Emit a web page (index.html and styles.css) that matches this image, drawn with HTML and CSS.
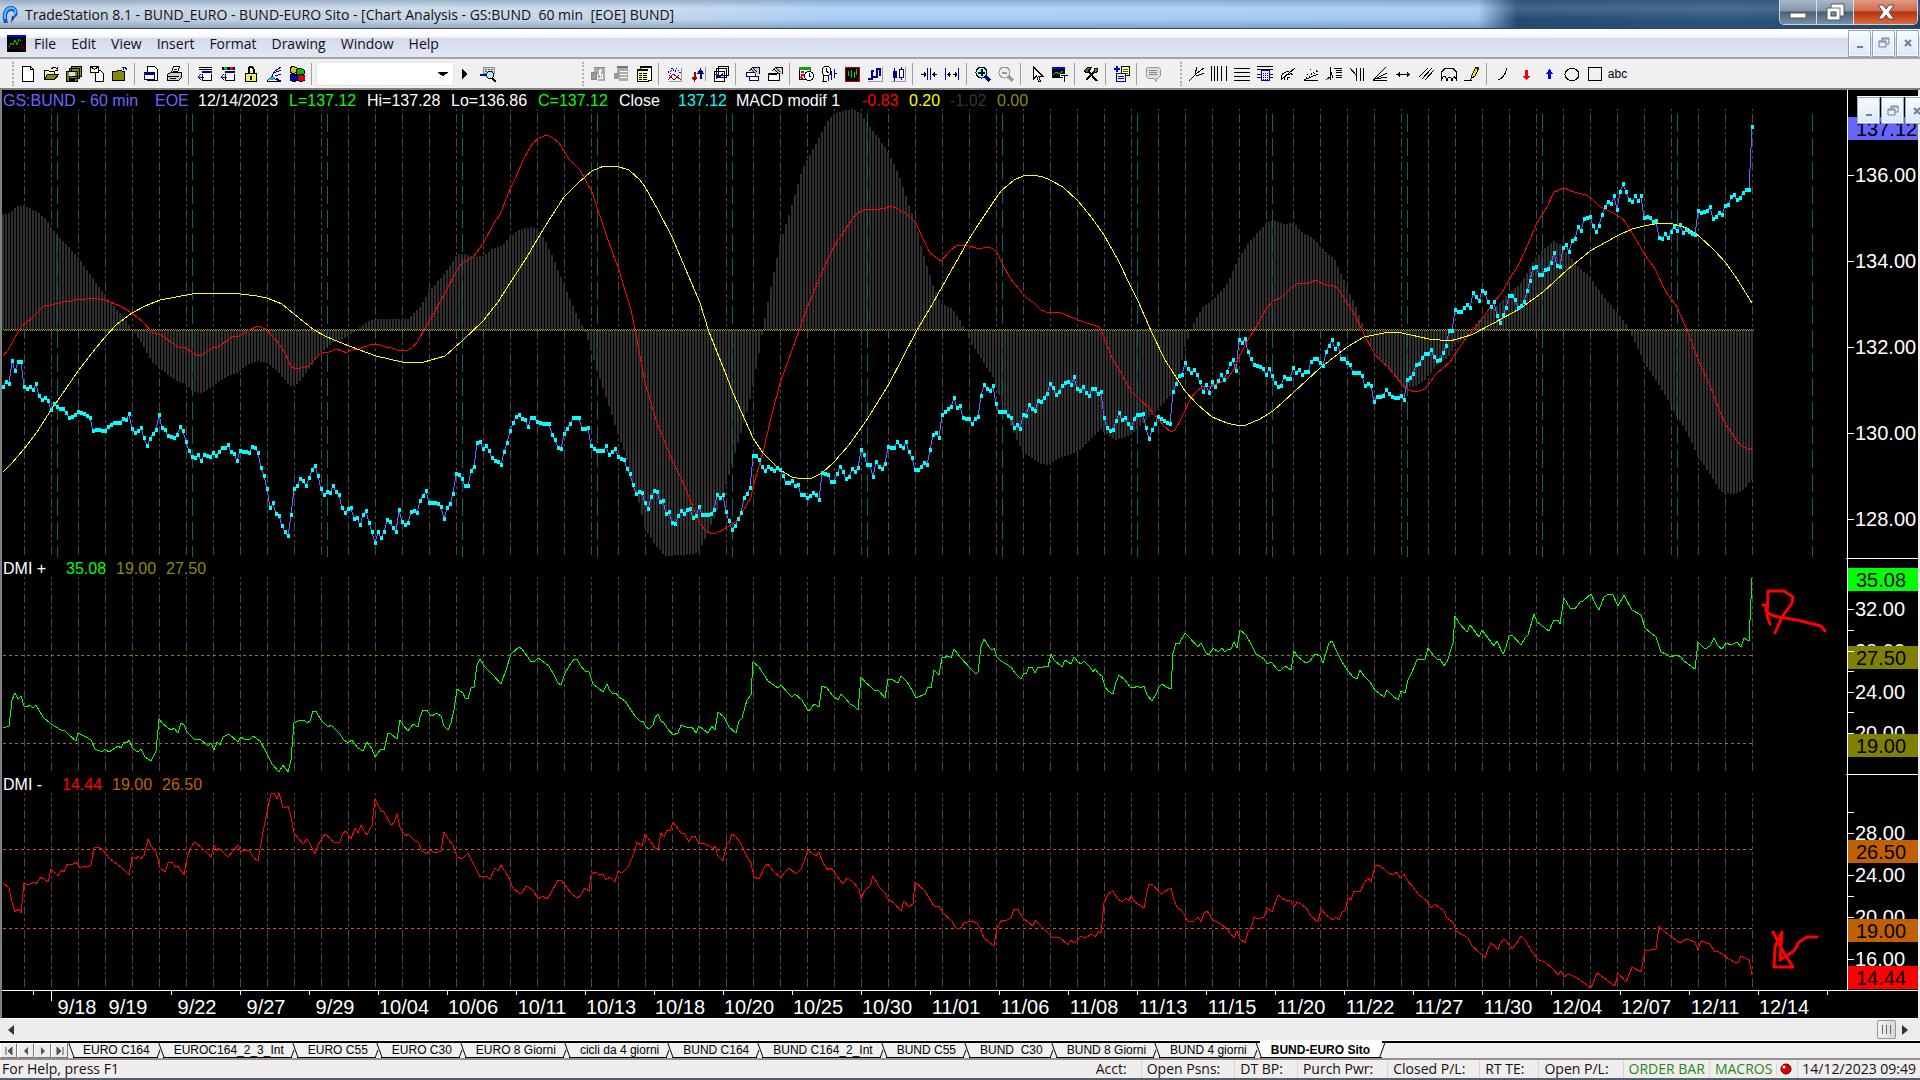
FILE: index.html
```html
<!DOCTYPE html>
<html lang="en">
<head>
    <meta charset="utf-8">
    <title>TradeStation 8.1 - BUND_EURO</title>
    <link rel="stylesheet" href="styles.css">
</head>
<body>
    <header class="titlebar">
        <svg class="logo" viewBox="0 0 18 20"><path d="M3 19C0 12 2 3 9 2c6-1 9 5 7 10l-3 2c1-4 0-7-3-7-4 0-5 6-3 12z" fill="#1650d8"/><path d="M4 15C3 9 5 4 10 4c4 0 5 3 4 6" fill="none" stroke="#4fc4ff" stroke-width="2"/><path d="M11 12l-1 7 4-6z" fill="#0a2c9c"/></svg>
        <h1>TradeStation 8.1 - BUND_EURO - BUND-EURO Sito - [Chart Analysis - GS:BUND&nbsp; 60 min&nbsp; [EOE] BUND]</h1>
        <div class="win-buttons">
            <button class="win-min" aria-label="Minimize"><svg width="18" height="14"><rect x="1" y="8" width="16" height="5" rx="1" fill="#fff" stroke="#555"/></svg></button>
            <button class="win-restore" aria-label="Restore"><svg width="20" height="18"><path d="M6 1h13v12h-4v4H2V5h4z" fill="#fff" stroke="#555"/><path d="M6 5h9v8" fill="none" stroke="#777"/><rect x="6" y="9" width="5" height="4" fill="#7b94ac" stroke="#445"/></svg></button>
            <button class="win-close" aria-label="Close"><svg width="20" height="16"><path d="M2 1h5l3 4 3-4h5l-5 7 5 7h-5l-3-4-3 4H2l5-7z" fill="#fff" stroke="#644"/></svg></button>
        </div>
    </header>

    <nav class="menubar">
        <svg class="doc-icon" viewBox="0 0 19 17"><path d="M0 0h19v17H0z" fill="#000"/><path d="M0 0h19v2H0z" fill="#00f"/><path d="M2 12l2-4 2 2 2-5 2 5 2-6 2 2" fill="none" stroke="#0c0"/><path d="M0 13h19M15 2v15" stroke="#900" stroke-dasharray="2 1"/></svg>
        <a href="#">File</a>
        <a href="#">Edit</a>
        <a href="#">View</a>
        <a href="#">Insert</a>
        <a href="#">Format</a>
        <a href="#">Drawing</a>
        <a href="#">Window</a>
        <a href="#">Help</a>
        <div class="mdi-buttons">
            <button aria-label="Minimize chart"><svg width="12" height="12"><path d="M3 9h6v2H3z" fill="#6d8095"/></svg></button>
            <button aria-label="Restore chart"><svg width="12" height="12"><path d="M4 4V1h7v6H8M4 2h7M1 4h7v6H1zM1 5h7" fill="none" stroke="#6d8095"/></svg></button>
            <button aria-label="Close chart"><svg width="12" height="12"><path d="M3 3l6 6M9 3l-6 6" stroke="#6d8095" stroke-width="2"/></svg></button>
        </div>
    </nav>

    <div class="toolbars">
        <div class="toolbar main-tools">
            <button aria-label="New"><svg viewBox="0 0 16 16"><path d="M2.500.5h8l3 3v12h-11zM10.500.5v3h3" fill="#fff" stroke="#000"/></svg></button>
            <button aria-label="Open"><svg viewBox="0 0 16 16"><path d="M1.500 13.500v-9h4l1 1h5v3" fill="#ff9" stroke="#000"/><path d="M1.500 13.500l3-5h11l-4 5z" fill="#880" stroke="#000"/><path d="M8.500 3c2-3 4-2 5 0M14.500 1v3h-3" fill="none" stroke="#000"/></svg></button>
            <button aria-label="Save all"><svg viewBox="0 0 16 16"><path d="M5.500.5h10v10h-10zM3.500 2.500h10v10h-10zM.5 5.500h11v10H.5z" fill="#880" stroke="#000"/><path d="M3 6h6v4H3z" fill="#ddd"/><path d="M3 12h6v3H3z"/></svg></button>
            <button aria-label="New from template"><svg viewBox="0 0 16 16"><path d="M6.500 4.500h5l3 3v8h-8z" fill="#fff" stroke="#000"/><path d="M1.500.5h8v6h-8zM1.500.5l4 3 4-3" fill="#ffc" stroke="#000"/></svg></button>
            <button aria-label="Close folder"><svg viewBox="0 0 16 16"><path d="M.5 14.500v-9h4l1-1h4l1 1h2v9z" fill="#880" stroke="#000"/><path d="M11.500 4V1.500M10 1.500h3l2 2" fill="none" stroke="#00a"/></svg></button>
            <i class="sep"></i>
            <button aria-label="Print preview"><svg viewBox="0 0 16 16"><path d="M4.500.5h7l3 3v11h-10z" fill="#fff" stroke="#000"/><path d="M1.500 6.500h10v7h-10z" fill="#fff" stroke="#008"/><path d="M1 6h11v3H1z" fill="#008"/></svg></button>
            <button aria-label="Print"><svg viewBox="0 0 16 16"><path d="M5.500 6.500l2-6h6l-2 6" fill="#fff" stroke="#000"/><path d="M1.500 8.500l3-2h11v5l-3 3h-11z" fill="#ccc" stroke="#000"/><path d="M2 10h11M4 12h7M8 3h3M7 5h4" stroke="#000"/><path d="M10 12h2v1h-2z" fill="#ee0"/></svg></button>
            <i class="sep"></i>
            <button aria-label="Symbol"><svg viewBox="0 0 16 16"><path d="M2 1h13M2 3h13" stroke="#000"/><path d="M5 5h10v2H5z" fill="#00a"/><path d="M5.500 8v6.500h9V8" fill="#fff" stroke="#000"/><path d="M7 11H1M4 8l-3 3 3 3" fill="none" stroke="#00a"/></svg></button>
            <button aria-label="Indicator"><svg viewBox="0 0 16 16"><path d="M2 1h13v3H2z"/><path d="M4 1h3v3H4z" fill="#0c0"/><path d="M10 1h3v3h-3z" fill="#f00"/><path d="M5 5h10v2H5z" fill="#00a"/><path d="M5.500 8v6.500h9V8" fill="#fff" stroke="#000"/><path d="M7 11H1M4 8l-3 3 3 3" fill="none" stroke="#00a"/></svg></button>
            <button aria-label="Lock"><svg viewBox="0 0 16 16"><path d="M5.500 7V3l1-2h3l1 2v4" fill="none" stroke="#000" stroke-width="2"/><path d="M2.500 7.500h11v8h-11z" fill="#ee6" stroke="#000"/><path d="M7 10h2v4H7z"/></svg></button>
            <button aria-label="Data network"><svg viewBox="0 0 16 16"><path d="M1 15l5-5 3 3 5 2M6 10l3-5 6-4M8 7l7-3M9 10l6-2M10 12l5 3" fill="none" stroke="#008"/><path d="M4 11h4v3H4z" fill="#0bb"/><path d="M1 15h14" stroke="#000"/></svg></button>
            <button aria-label="Blocks"><svg viewBox="0 0 16 16"><path d="M1 2l3-2 4 2v4L4 8 1 6z" fill="#cc0" stroke="#000"/><path d="M7 4l4-2 4 2v4l-4 2-4-2z" fill="#0b0" stroke="#000"/><path d="M1 9l3-2 4 2v5l-3 2-4-2z" fill="#00b" stroke="#000"/><path d="M8 10l4-2 4 2v4l-4 2-4-2z" fill="#d00" stroke="#000"/></svg></button>
            <i class="sep"></i>
            <select aria-label="Symbol list"><option></option></select>
            <button class="go" aria-label="Go"><svg viewBox="0 0 6 10"><path d="M0 0l6 5-6 5z"/></svg></button>
            <button aria-label="Symbol lookup"><svg viewBox="0 0 16 16"><path d="M3.500 1.500h11v6h-11z" fill="#ddd" stroke="#889"/><path d="M5 3h9M5 5h9" stroke="#555" stroke-dasharray="2 1"/><path d="M0 9h6" stroke="#00a" stroke-width="2"/><circle cx="10" cy="9" r="3.500" fill="#aef" stroke="#000"/><path d="M12 12l4 4" stroke="#000" stroke-width="2"/></svg></button>
        </div>

        <div class="toolbar chart-tools">
            <button disabled aria-label="Cash"><svg viewBox="0 0 16 16"><path d="M4 1h11v14H8V8H4z" fill="#aaa"/><path d="M4 1h11M1 6h5v7H1z" fill="#999" stroke="#888"/><path d="M12 4H9v4h3v4H8M10 3v10" fill="none" stroke="#fff"/></svg></button>
            <button disabled aria-label="Grid"><svg viewBox="0 0 16 16"><path d="M4 1h11v14H6V8H4z" fill="#aaa"/><path d="M1 7h5v6H1z" fill="#999"/><path d="M7 5h7M7 8h7M7 11h7" stroke="#fff"/><path d="M4 1h11" stroke="#777" stroke-width="2"/></svg></button>
            <button aria-label="Notes"><svg viewBox="0 0 16 16"><path d="M4.500.5h11v14h-3v1h-11v-12h3z" fill="#fff" stroke="#000"/><path d="M2 5h10v10H2z" fill="#ff9"/><path d="M3 7h3M7 7h4M3 9h3M7 9h4M3 11h3M7 11h4M3 13h3M7 13h4" stroke="#000"/><path d="M1 4h11M5 1h10" stroke="#000" stroke-width="2"/></svg></button>
            <i class="sep"></i>
            <button aria-label="Analysis technique"><svg viewBox="0 0 16 16"><path d="M1 5l2 3 2-6 3 4 2-4 3 5 2-2" fill="none" stroke="#00d" stroke-dasharray="2 1"/><path d="M1 14l5-6 3 2 5 4" fill="none" stroke="#d00"/><path d="M2 9l5 5 5-5" fill="none" stroke="#000"/><path d="M14.500 2v13.500H2" fill="none" stroke="#999"/></svg></button>
            <button aria-label="Strategy"><svg viewBox="0 0 16 16"><path d="M4 6h1v5h2l-2.500 4L2 11h2z" fill="#900" stroke="#900"/><path d="M10 12h1V7h2l-2.500-4L8 7h2z" fill="#008" stroke="#008"/><path d="M15.500 1v14" stroke="#999"/></svg></button>
            <button aria-label="Charts"><svg viewBox="0 0 16 16"><path d="M5.500.5h10v9h-10zM3.500 2.500h10v9h-10zM1.500 5.500h10v10h-10z" fill="#fff" stroke="#000"/><path d="M3 13l2-4 2 3 3-5" fill="none" stroke="#00c"/><path d="M2 8h3" stroke="#d00"/></svg></button>
            <i class="sep"></i>
            <button aria-label="Format symbol"><svg viewBox="0 0 16 16"><path d="M2.500 6.500h9v4h-9z" fill="#fff" stroke="#008"/><path d="M5.500 10.500h9v4h-9z" fill="#ffc" stroke="#008"/><path d="M5 5l4-4h6v7" fill="#ccc" stroke="#000"/><path d="M7 3l4 4M9 2l4 4" stroke="#000"/></svg></button>
            <button aria-label="Format window"><svg viewBox="0 0 16 16"><path d="M1.500 7.500h11v7h-11z" fill="#fff" stroke="#000"/><path d="M1 7h9v2H1z"/><path d="M5 5l4-4h6v7" fill="#ccc" stroke="#000"/><path d="M7 3l4 4M9 2l4 4" stroke="#000"/></svg></button>
            <i class="sep"></i>
            <button aria-label="Session"><svg viewBox="0 0 16 16"><path d="M1.500 1.500h11v12h-11z" fill="#fff" stroke="#000"/><path d="M1 1h12v3H1z" fill="#0a0"/><path d="M3 6h3M3 9h3M3 11l2 2" stroke="#d00" stroke-width="2"/><circle cx="11" cy="10" r="4.500" fill="#fff" stroke="#000"/><path d="M11 7v3h2" fill="none" stroke="#000"/></svg></button>
            <button aria-label="Bar interval"><svg viewBox="0 0 16 16"><circle cx="5.500" cy="5" r="4.500" fill="#fff" stroke="#000"/><path d="M5 2v3l3 2M3 9l-1 6h4" fill="none" stroke="#000"/><path d="M10.500 5v9M8 8h2M13.500 3v9M14 7h2M7.500 10v5" stroke="#00b"/></svg></button>
            <button aria-label="Chart background"><svg viewBox="0 0 16 16"><path d="M1 1h14v14H1z" stroke="#b00"/><path d="M4.500 5v5M7.500 4v8M10.500 6v6M12.500 3v6" stroke="#0d0"/></svg></button>
            <button aria-label="Bar chart"><svg viewBox="0 0 16 16"><path d="M4.500 4v10M1 13h3M4 5h3M9.500 2v10M9 11h-3M10 3h3M13 2v8" fill="none" stroke="#008" stroke-width="2"/><path d="M15.500 1v14.500H1" fill="none" stroke="#999"/></svg></button>
            <button aria-label="Candlestick"><svg viewBox="0 0 16 16"><path d="M4.500 2v13M11.500 1v13" stroke="#008"/><path d="M3 5h4v7H3z" fill="#008"/><path d="M9.500 3.500h4v8h-4z" fill="#fff" stroke="#008"/><path d="M15.500 1v14.500H1" fill="none" stroke="#999"/></svg></button>
            <i class="sep"></i>
            <button aria-label="Decrease spacing"><svg viewBox="0 0 16 16"><path d="M6.500 2v12M9.500 2v12" stroke="#00b"/><path d="M0 8.500h5M16 8.500h-5M3 6v5M13 6v5M4 7v3M12 7v3" fill="none" stroke="#000"/></svg></button>
            <button aria-label="Increase spacing"><svg viewBox="0 0 16 16"><path d="M1.500 2v12M14.500 2v12" stroke="#00b"/><path d="M3 8.500h4M9 8.500h4M5 6v5M11 6v5M4 7v3M12 7v3" fill="none" stroke="#000"/></svg></button>
            <i class="sep"></i>
            <button aria-label="Zoom in"><svg viewBox="0 0 16 16"><circle cx="6.500" cy="6.500" r="5.500" fill="#9ff" stroke="#000"/><path d="M3 6.500h7M6.500 3v7" stroke="#000" stroke-width="2"/><path d="M10 10l5 5" stroke="#008" stroke-width="3"/></svg></button>
            <button disabled aria-label="Zoom out"><svg viewBox="0 0 16 16"><circle cx="6.500" cy="6.500" r="5.500" fill="#eee" stroke="#999"/><path d="M4 6.500h5" stroke="#999" stroke-width="2"/><path d="M10 10l5 5" stroke="#999" stroke-width="3"/></svg></button>
            <i class="sep"></i>
            <button aria-label="Pointer"><svg viewBox="0 0 16 16"><path d="M4.500 1v12l3-3 2 5h2l-2-5h4z" fill="#fff" stroke="#000"/></svg></button>
            <button aria-label="Data tip"><svg viewBox="0 0 16 16"><path d="M0 1h13v11H0z"/><path d="M0 1h13v2H0z" fill="#00f"/><path d="M1 9l3-3 3 2 4-3" fill="none" stroke="#0c0"/><path d="M8 8h8v2h-3v6h-2v-6H8z" stroke="#fff"/></svg></button>
            <i class="sep"></i>
            <button aria-label="Tools"><svg viewBox="0 0 16 16"><path d="M3 14L13 4M4 4l10 11" stroke="#000" stroke-width="2"/><path d="M1 5l4-4h4L4 7z" fill="#660" stroke="#000"/><path d="M11 3l3-1 1 3-3 2z" fill="#990" stroke="#000"/></svg></button>
            <i class="sep"></i>
            <button aria-label="Add page"><svg viewBox="0 0 16 16"><path d="M0 3h6M3 0v6" stroke="#00c" stroke-width="2"/><path d="M7.500.5h8v9h-8z" fill="#ff9" stroke="#000"/><path d="M9 3h5M9 5h5M9 7h5" stroke="#550"/><path d="M2.500 7.500h9v8h-9z" fill="#eef" stroke="#008"/><path d="M4 10h6M4 12h6" stroke="#008"/></svg></button>
            <i class="sep"></i>
            <button disabled aria-label="Comment"><svg viewBox="0 0 16 16"><path d="M3 1h10l2 2v7l-2 2h-2v3l-3-3H3l-2-2V3z" fill="#ddd" stroke="#999"/><path d="M4 4h8M4 6h8M4 8h8" stroke="#888"/></svg></button>
        </div>

        <div class="toolbar draw-tools">
            <button aria-label="Pitchfork"><svg viewBox="0 0 16 16"><path d="M1 15l8-8M9 1L7 8l2 2 7-3M16 2L9 7" fill="none" stroke="#000"/></svg></button>
            <button aria-label="Vertical lines"><svg viewBox="0 0 16 16"><path d="M.5 0v15M3.500 0v15M6.500 0v15M10.500 0v15M15.500 0v15" stroke="#000"/></svg></button>
            <button aria-label="Horizontal lines"><svg viewBox="0 0 16 16"><path d="M0 2.500h16M0 6.500h16M0 10.500h16M0 14.500h16" stroke="#000"/></svg></button>
            <button aria-label="Price levels"><svg viewBox="0 0 16 16"><path d="M0 .5h16M0 3.500h16M0 8.500h16M0 11.500h16" stroke="#000"/><path d="M4.500 4.500h8v10h-8z" fill="#eef" stroke="#00a"/><path d="M6 7h5M6 9h5M6 11h5M6 13h5" stroke="#00a" stroke-dasharray="1 1"/></svg></button>
            <button aria-label="Speed arcs"><svg viewBox="0 0 16 16"><path d="M1 14c0-6 3-9 8-8l4 3M4 14c0-4 2-6 6-5M7 14c0-2 1-3 3-3M1 14L15 2" fill="none" stroke="#000"/></svg></button>
            <button aria-label="Speed lines"><svg viewBox="0 0 16 16"><path d="M1 14.500h14M1 14L15 8" stroke="#000"/><path d="M1 14L9 1M1 14L15 3M1 14l14-9" stroke="#000" stroke-dasharray="1 2"/></svg></button>
            <button aria-label="Price retracement"><svg viewBox="0 0 16 16"><path d="M0 14l4-3V3l3 9M8 2h8M10 4h6M10 6.500h6M10 9h6M10 11.500h6" fill="none" stroke="#000"/><path d="M4.500 1v13" stroke="#000"/></svg></button>
            <button aria-label="Time retracement"><svg viewBox="0 0 16 16"><path d="M1 2l6 7M7.500 2v13M11.500 2v13M14.500 2v13" stroke="#000"/></svg></button>
            <button aria-label="Fan lines"><svg viewBox="0 0 16 16"><path d="M1 14.500h14M1 14L14 1M1 14l14-7M3 13l12-2" stroke="#000"/></svg></button>
            <button aria-label="Time line"><svg viewBox="0 0 16 16"><path d="M1 8.500h14M4 6v5M12 6v5M3 7v3M13 7v3" fill="none" stroke="#000"/></svg></button>
            <button aria-label="Channel"><svg viewBox="0 0 16 16"><path d="M1 11l9-9M4 13L14 2M7 14l9-10" stroke="#000"/></svg></button>
            <button aria-label="Cycles"><svg viewBox="0 0 16 16"><path d="M.5 15V6l4-4h7l4 4v9M1 13c1-4 4-4 5 2 1-5 4-5 5 0 1-5 3-5 4-2" fill="none" stroke="#000"/></svg></button>
            <button aria-label="Pencil"><svg viewBox="0 0 16 16"><path d="M7 13l1-4 4-8 3 1-4 8z" fill="#ee0" stroke="#000"/><path d="M12 1l3 1-1 2-3-1z" fill="#900"/><path d="M0 14.500h8" stroke="#000"/></svg></button>
            <i class="sep"></i>
            <button aria-label="Arc"><svg viewBox="0 0 16 16"><path d="M3 14c4-1 8-6 9-12" fill="none" stroke="#000"/></svg></button>
            <button aria-label="Down arrow"><svg viewBox="0 0 16 16"><path d="M7 4h3v6h2l-3.500 4L5 10h2z" fill="#f00"/></svg></button>
            <button aria-label="Up arrow"><svg viewBox="0 0 16 16"><path d="M7 13h3V8h2L8.500 3 5 8h2z" fill="#00f"/></svg></button>
            <button aria-label="Ellipse"><svg viewBox="0 0 16 16"><ellipse cx="8" cy="8.500" rx="7" ry="6" fill="none" stroke="#000"/></svg></button>
            <button aria-label="Rectangle"><svg viewBox="0 0 16 16"><path d="M1.500 1.500h13v13h-13z" fill="none" stroke="#000"/></svg></button>
            <button class="text-tool">abc</button>
        </div>
    </div>

    <main class="chart-window">
        <svg id="chart" viewBox="0 90 1920 928">
            <g id="grid"></g>
            <g id="plots"></g>
            <g id="axes"></g>
            <g class="legend">
                <text y="106"><tspan class="violet" x="3">GS:BUND - 60 min</tspan><tspan class="violet" x="155">EOE</tspan><tspan x="198">12/14/2023</tspan><tspan class="lime" x="289">L=137.12</tspan><tspan x="367">Hi=137.28</tspan><tspan x="451">Lo=136.86</tspan><tspan class="lime" x="538">C=137.12</tspan><tspan x="619">Close</tspan><tspan class="cyan" x="678">137.12</tspan><tspan x="736">MACD modif 1</tspan><tspan class="red" x="862">-0.83</tspan><tspan class="yellow" x="909">0.20</tspan><tspan class="dim" x="950">-1.02</tspan><tspan class="olive" x="997">0.00</tspan></text>
                <text y="574"><tspan x="3">DMI +</tspan><tspan class="lime" x="66">35.08</tspan><tspan class="olive" x="116">19.00</tspan><tspan class="olive" x="166">27.50</tspan></text>
                <text y="790"><tspan x="3">DMI -</tspan><tspan class="red" x="62">14.44</tspan><tspan class="orange" x="112">19.00</tspan><tspan class="orange" x="162">26.50</tspan></text>
            </g>
            <g class="scribble">
                <path d="M1770 624l-3-8 1-25h16l9 6-1 6-10 14-7 16M1763 605l3 0v6q5 5 13 6l18 3 24 6 4 5"/>
                <path d="M1773 932l11 21 9 14h-19l1-20 7-15-2 28 14-9 5-9 8-5h10"/>
            </g>
        </svg>
        <div class="mdi-buttons floating">
            <button aria-label="Minimize window"><svg width="12" height="12"><path d="M3 9h6v2H3z" fill="#6d8095"/></svg></button>
            <button aria-label="Restore window"><svg width="12" height="12"><path d="M4 4V1h7v6H8M4 2h7M1 4h7v6H1zM1 5h7" fill="none" stroke="#6d8095"/></svg></button>
            <button aria-label="Close window"><svg width="12" height="12"><path d="M3 3l6 6M9 3l-6 6" stroke="#6d8095" stroke-width="2"/></svg></button>
        </div>
    </main>

    <div class="scrollbar">
        <button aria-label="Scroll left"><svg width="6" height="10"><path d="M6 0L0 5l6 5z" fill="#333"/></svg></button>
        <div class="track"><span class="thumb"></span></div>
        <button aria-label="Scroll right"><svg width="6" height="10"><path d="M0 0l6 5-6 5z" fill="#333"/></svg></button>
    </div>

    <div class="tabs">
        <button class="nav" aria-label="First"><svg width="8" height="8"><path d="M1 0v8M7 0L3 4l4 4z" fill="#555" stroke="#555"/></svg></button>
        <button class="nav" aria-label="Previous"><svg width="8" height="8"><path d="M6 0L2 4l4 4z" fill="#555"/></svg></button>
        <button class="nav" aria-label="Next"><svg width="8" height="8"><path d="M2 0l4 4-4 4z" fill="#555"/></svg></button>
        <button class="nav" aria-label="Last"><svg width="8" height="8"><path d="M7 0v8M1 0l4 4-4 4z" fill="#555" stroke="#555"/></svg></button>
        <a class="tab" href="#">EURO C164</a>
        <a class="tab" href="#">EUROC164_2_3_Int</a>
        <a class="tab" href="#">EURO C55</a>
        <a class="tab" href="#">EURO C30</a>
        <a class="tab" href="#">EURO 8 Giorni</a>
        <a class="tab" href="#">cicli da 4 giorni</a>
        <a class="tab" href="#">BUND C164</a>
        <a class="tab" href="#">BUND C164_2_Int</a>
        <a class="tab" href="#">BUND C55</a>
        <a class="tab" href="#">BUND&nbsp; C30</a>
        <a class="tab" href="#">BUND 8 Giorni</a>
        <a class="tab" href="#">BUND 4 giorni</a>
        <a class="tab active" href="#">BUND-EURO Sito</a>
    </div>

    <footer class="statusbar">
        <span class="hint">For Help, press F1</span>
        <span>Acct:</span>
        <span>Open Psns:</span>
        <span>DT BP:</span>
        <span>Purch Pwr:</span>
        <span>Closed P/L:</span>
        <span>RT TE:</span>
        <span>Open P/L:</span>
        <span class="on">ORDER BAR</span>
        <span class="on">MACROS</span>
        <span class="led"><svg width="12" height="12"><circle cx="6" cy="6" r="5" fill="#d00" stroke="#500"/><circle cx="4" cy="4" r="1.500" fill="#fff"/></svg></span>
        <span class="clock">14/12/2023 09:49</span>
    </footer>
    <script src="chart.js"></script>
</body>
</html>
```
FILE: styles.css
```css
* {
    box-sizing: border-box;
}

body {
    margin: 0;
    height: 100vh;
    display: flex;
    flex-direction: column;
    overflow: hidden;
    background: #f0f0f0;
    font-family: "Open Sans", "Noto Sans", sans-serif;
    font-size: 14px;
    color: #111;
}

button {
    padding: 0;
    border: 0;
    background: none;
    display: flex;
    align-items: center;
    justify-content: center;
}

a {
    color: inherit;
    text-decoration: none;
}

/* title bar */
.titlebar {
    height: 29px;
    display: flex;
    align-items: flex-start;
    padding: 0 2px 0 1px;
    border-bottom: 1px solid #3c4650;
    background:
        linear-gradient(to bottom, rgba(70, 100, 140, 0.3), rgba(255, 255, 255, 0.15) 30%, rgba(255, 255, 255, 0) 70%, rgba(40, 70, 110, 0.3)),
        linear-gradient(to right, #bccbdc, #c6d6e6 20%, #c0d4ea 35%, #a8cdf3 43%, #a3cbf6 60%, #9fc6ef 77%, #254a70 79%, #2b5580 90%, #1f4468);
}

.logo {
    width: 18px;
    height: 20px;
    margin-top: 4px;
}

h1 {
    flex: 1;
    margin: 0 0 0 6px;
    font-size: 14px;
    font-weight: normal;
    line-height: 29px;
    white-space: pre;
}

.win-buttons {
    display: flex;
    height: 25px;
    border: 1px solid #c9d5e0;
    border-top: 0;
    border-radius: 0 0 5px 5px;
    overflow: hidden;
}

.win-buttons button {
    width: 37px;
    border-right: 1px solid #d5dee6;
    background: linear-gradient(#a9b8c7, #8796a6 45%, #4a6076 50%, #7890a6);
}

.win-buttons .win-close {
    width: 63px;
    border-right: 0;
    background: linear-gradient(#e39a83, #cf6a4e 45%, #b4310e 50%, #dc6c3c);
}

/* menu */
.menubar {
    height: 30px;
    display: flex;
    align-items: center;
    gap: 15px;
    padding: 0 1px 0 7px;
    background: linear-gradient(#fff 20%, #eef0f8 30%, #d5dbec 34%, #e2e7f4);
    border-bottom: 2px solid #a5a5a5;
}

.doc-icon {
    width: 19px;
    height: 17px;
    margin-right: -7px;
}

.mdi-buttons {
    display: flex;
    gap: 1px;
}

.menubar .mdi-buttons {
    margin-left: auto;
}

.mdi-buttons button {
    flex: none;
    width: 23px;
    height: 27px;
    border: 1px solid #94a8bc;
    background: linear-gradient(#f8fbff, #dbe8f6);
    box-shadow: inset 0 0 0 1px #f4f9ff;
}

/* toolbars */
.toolbars {
    height: 31px;
    display: flex;
    border-bottom: 2px solid #808080;
    background: #f0f0f0;
}

.toolbar {
    display: flex;
    align-items: center;
    padding-left: 5px;
}

.toolbar::before {
    content: "";
    width: 0;
    height: 24px;
    margin-right: 2px;
    border-left: 2px dotted #b0b0b0;
}

.main-tools {
    flex: 0 0 574px;
    padding-left: 12px;
}

.chart-tools {
    flex: 0 0 598px;
    padding-left: 8px;
}

.draw-tools {
    padding-left: 8px;
}

.toolbar button {
    width: 23px;
    height: 24px;
}

.toolbar svg {
    width: 16px;
    height: 16px;
    shape-rendering: crispEdges;
}

.toolbar .go {
    width: 22px;
}

.go svg {
    width: 6px;
    height: 10px;
}

.toolbar .text-tool {
    font: 12px "Liberation Sans", Arial, sans-serif;
}

.sep {
    width: 2px;
    height: 22px;
    margin: 0 3px;
    border-left: 1px solid #a0a0a0;
}

.toolbar select {
    width: 138px;
    height: 24px;
    border: 1px solid #e2e3ea;
    appearance: none;
    background:
        linear-gradient(to bottom right, #000 50%, transparent 50%) 126px 9px / 5px 5px no-repeat,
        linear-gradient(to bottom left, #000 50%, transparent 50%) 121px 9px / 5px 5px no-repeat,
        #fff;
}

/* chart */
.chart-window {
    flex: 1;
    min-height: 0;
    position: relative;
    background: #000;
    border-left: 2px solid #808080;
    margin-right: 2px;
}

#chart {
    display: block;
    width: calc(100% + 4px);
    height: 100%;
    margin-left: -2px;
    font-family: "Liberation Sans", Arial, sans-serif;
}

.floating {
    position: absolute;
    top: 6px;
    right: -10px;
    border-top: 1px solid #fff;
}

.legend text {
    font-size: 16px;
    fill: #fff;
}

.legend .violet { fill: #6666ff; }
.legend .lime { fill: #00ff00; }
.legend .cyan { fill: #00ffff; }
.legend .red { fill: #ff0000; }
.legend .yellow { fill: #ffff00; }
.legend .dim { fill: #363636; }
.legend .olive { fill: #8c8c00; }
.legend .orange { fill: #c06000; }

.scribble {
    fill: none;
    stroke: #ff0000;
    stroke-width: 3;
    stroke-linejoin: round;
    stroke-linecap: round;
}

.day {
    stroke: #484848;
    stroke-dasharray: 9 3 3 3 3 3;
}

.week {
    stroke: #006868;
    stroke-dasharray: 18 6;
}

.hist {
    stroke: #303030;
    stroke-width: 2;
}

.line {
    fill: none;
    stroke-width: 1;
    shape-rendering: crispEdges;
}

.level {
    stroke-dasharray: 3 3;
}

.zero {
    stroke: #94941c;
    stroke-dasharray: 1 1;
}

.axis {
    stroke: #fff;
    stroke-width: 1;
    fill: none;
}

.grid-lines,
.axis,
.hist,
.level,
.zero,
.dots {
    shape-rendering: crispEdges;
}

.axis-label {
    font-size: 20px;
    fill: #fff;
}

.date-label {
    font-size: 20px;
    fill: #fff;
    text-anchor: middle;
}

.badge-label {
    font-size: 20px;
    fill: #000;
}

/* scrollbar */
.scrollbar {
    height: 23px;
    display: flex;
    padding: 1px 6px 2px 2px;
    border-top: 1px solid #fff;
    border-bottom: 1px solid #fff;
    background: #ececec;
}

.scrollbar button {
    width: 18px;
    height: 19px;
}

.track {
    flex: 1;
    display: flex;
    justify-content: flex-end;
}

.thumb {
    width: 19px;
    height: 19px;
    border: 1px solid #979797;
    border-radius: 2px;
    background:
        repeating-linear-gradient(to right, #666 0 1px, transparent 1px 4px) 4px 4px / 10px 9px no-repeat,
        linear-gradient(to right, #f3f3f3, #d8d8d8);
}

/* workspace tabs */
.tabs {
    height: 19px;
    display: flex;
    border-top: 2px solid #000;
    border-bottom: 2px solid #909090;
    background: #f0f0f0;
    font: 12px/14px "Liberation Sans", Arial, sans-serif;
    color: #000;
}

.nav {
    width: 17px;
    height: 15px;
    border: 1px solid #fff;
    border-right-color: #777;
    border-bottom-color: #777;
    background: #ececec;
}

.tab {
    position: relative;
    padding: 0 8px 0 10px;
    margin-left: 5px;
    border-bottom: 1px solid #000;
    white-space: pre;
}

.tab + .tab {
    padding-left: 11px;
}

/* slanted edges between two tabs */
.tab::before,
.tab::after {
    content: "";
    position: absolute;
    top: 0;
    width: 1px;
    height: 15px;
    background: #000;
    transform: skewX(20deg);
    left: -2px;
}

.tab::after {
    left: auto;
    right: -1px;
    top: 7px;
    height: 8px;
    transform: skewX(-20deg);
}

.tab.active {
    margin-top: -2px;
    padding: 2px 12px 0 11px;
    background: #fff;
    font-weight: bold;
}

.tab.active::before,
.tab.active::after {
    top: 0;
    height: 17px;
}

/* status bar */
.statusbar {
    height: 20px;
    display: flex;
    align-items: center;
    padding: 0 4px 0 2px;
    border-bottom: 2px solid #50606c;
    background: #f1edec;
    white-space: nowrap;
}

.statusbar span {
    padding: 0 14px 0 5px;
    border-left: 1px solid #d8d4d4;
    line-height: 18px;
}

.statusbar .hint {
    flex: 1;
    padding: 0;
    border: 0;
}

.statusbar .hint + span {
    border: 0;
}

.statusbar .on {
    padding: 0 4px 0 5px;
    color: #1b8a1b;
}

.statusbar .led {
    padding: 0 5px 0 3px;
    display: flex;
}

.statusbar .clock {
    padding: 0 0 0 4px;
}
```
FILE: chart.js
```js
// every series is a list of "x,y" knots; bars sit 3px apart
var BAR = 3;
var FIRST = 3;
var LAST = 1752;
var ZERO = 330;

var slow = "3,472 12,463 24,449 37,432 51,410 65,390 78,371 92,353 105,337 116,325 132,313 145,306 160,300 176,297 192,294 204,293 220,293 241,294 257,296 267,298 282,304 294,314 314,330 327,337 349,346 376,356 402,362 424,362 445,356 462,341 483,321 498,302 510,283 527,257 538,238 551,217 564,197 578,183 592,171 604,166 616,166 629,170 640,180 645,187 658,210 672,237 700,303 709,332 727,377 733,393 753,438 763,453 780,470 792,477 802,479 812,478 822,473 834,462 849,445 861,428 868,418 889,384 916,332 933,303 942,287 959,257 969,239 980,222 996,198 1002,190 1014,180 1023,176 1033,175 1043,177 1050,180 1063,187 1078,201 1092,218 1104,235 1118,260 1131,287 1138,301 1152,333 1165,360 1176,377 1185,391 1198,405 1212,417 1227,423 1240,426 1246,425 1260,419 1273,411 1294,392 1320,368 1347,347 1364,337 1384,333 1397,332 1411,335 1429,339 1450,341 1471,335 1494,323 1521,308 1543,292 1567,270 1590,251 1617,236 1632,229 1644,226 1655,224 1664,223 1673,224 1687,228 1699,236 1714,250 1726,263 1739,282 1752,303";

var fast = "3,356 8,350 14,339 21,327 33,317 44,306 51,305 63,302 71,301 78,299 86,299 91,298 105,300 120,306 132,313 143,322 153,333 161,335 178,347 184,347 196,355 202,355 212,348 218,347 232,337 239,336 249,330 258,326 266,329 280,345 286,355 291,367 298,369 308,366 321,353 329,352 337,349 347,353 352,349 359,349 372,344 380,345 386,347 390,347 397,350 406,351 412,348 418,341 425,328 433,315 445,293 457,270 462,263 473,257 483,244 494,223 500,215 510,189 516,177 524,158 533,143 539,138 547,135 553,138 559,143 564,151 569,159 580,170 592,192 598,210 608,240 619,270 631,310 636,335 645,383 657,423 672,460 682,480 700,524 707,532 713,534 721,531 727,527 736,522 743,511 751,497 753,487 763,452 771,418 780,383 800,328 807,308 820,277 834,246 845,230 855,215 861,211 868,209 874,210 880,209 886,208 891,206 898,209 908,215 916,223 922,237 930,253 941,261 949,252 957,245 965,245 980,249 986,247 991,248 996,251 1002,263 1010,278 1023,294 1028,299 1033,302 1041,310 1049,313 1059,312 1078,320 1099,327 1104,337 1112,358 1122,375 1131,391 1138,398 1149,408 1164,426 1171,432 1175,430 1182,417 1191,398 1197,391 1202,387 1212,386 1227,379 1233,371 1239,357 1246,343 1253,332 1267,308 1273,301 1282,297 1292,287 1299,283 1306,284 1316,280 1325,285 1333,285 1338,289 1347,303 1354,313 1363,332 1374,353 1381,361 1389,368 1402,384 1409,390 1416,392 1425,389 1436,374 1450,362 1455,354 1466,338 1475,328 1482,319 1494,302 1501,294 1509,280 1519,264 1528,244 1537,223 1547,207 1554,192 1564,188 1574,192 1586,195 1591,198 1599,206 1613,213 1623,219 1632,233 1644,253 1655,269 1666,292 1677,307 1687,330 1699,362 1710,385 1719,410 1726,425 1733,435 1739,444 1749,450 1752,448";

var hist = "3,214 9,213 18,206 24,205 39,213 47,220 51,227 63,241 78,257 92,277 105,295 118,311 131,327 141,342 153,363 176,381 186,384 194,392 202,393 216,384 229,375 237,373 247,365 259,361 267,363 278,372 290,386 296,385 304,376 321,352 333,342 347,337 359,328 369,321 378,319 408,319 420,307 429,292 439,280 449,268 457,254 465,254 473,257 483,256 494,248 502,246 510,237 520,229 531,227 538,229 545,240 553,257 564,285 576,313 583,327 588,340 598,373 608,403 619,437 625,453 637,495 645,527 653,542 665,556 682,555 698,553 706,537 716,513 727,482 733,460 741,433 747,412 753,385 759,353 764,323 771,287 780,243 790,212 802,170 807,160 818,140 827,122 834,114 843,111 853,109 861,113 868,125 878,137 889,153 900,178 908,202 916,223 922,250 933,285 941,303 953,309 961,322 965,329 971,343 984,363 994,378 1000,398 1008,418 1016,438 1023,452 1033,459 1041,464 1049,465 1057,459 1069,455 1080,450 1092,438 1101,429 1108,435 1116,440 1131,435 1143,423 1159,408 1171,395 1180,370 1184,350 1190,333 1194,323 1202,308 1212,301 1228,283 1239,257 1251,240 1267,222 1276,221 1283,224 1294,223 1303,233 1312,237 1326,252 1335,260 1347,287 1356,307 1364,328 1372,347 1381,360 1395,377 1404,388 1416,386 1425,380 1436,367 1448,357 1457,344 1466,337 1473,327 1482,317 1498,305 1509,293 1521,283 1533,262 1543,250 1554,241 1560,244 1567,253 1579,267 1590,277 1604,297 1617,312 1628,327 1634,340 1644,362 1659,385 1673,409 1687,433 1699,458 1712,477 1721,492 1733,494 1742,491 1752,480";

var price = "3,387 6,382 9,384 12,361 15,371 18,362 21,362 24,387 27,389 30,387 33,390 36,384 39,396 42,400 45,398 48,401 51,410 54,404 57,407 60,409 63,409 66,413 69,418 72,417 78,412 84,414 90,418 93,431 96,430 105,431 108,427 114,423 120,423 123,419 126,420 129,414 132,429 135,433 141,428 144,438 147,446 150,439 153,434 156,430 159,415 162,428 165,430 168,436 174,438 177,435 180,427 183,431 186,442 189,451 192,457 195,458 198,455 201,461 204,455 210,457 213,453 216,456 222,448 225,448 228,445 231,452 234,454 237,461 240,451 249,453 252,447 255,448 258,453 261,468 264,476 267,489 270,508 273,503 276,514 279,516 282,526 285,532 288,536 291,515 294,489 297,486 300,479 303,481 306,486 309,478 312,470 315,466 318,476 321,489 324,495 327,492 330,493 333,486 336,492 339,495 342,508 345,513 348,509 351,508 354,519 357,518 360,525 363,515 366,511 369,523 372,532 375,543 378,532 381,538 384,532 387,520 390,522 393,528 396,532 399,510 402,522 405,525 408,523 411,512 414,511 417,513 420,501 423,496 426,491 429,503 435,503 438,504 441,507 444,519 447,508 450,504 453,494 456,474 459,475 462,479 465,486 468,486 471,471 474,467 477,443 480,442 483,449 486,446 489,451 492,458 495,461 498,462 501,465 504,452 507,443 510,431 513,423 516,417 519,415 522,419 525,420 528,427 531,418 534,418 537,422 543,424 549,424 552,435 555,440 558,448 561,449 564,434 570,424 573,418 579,418 582,429 588,428 591,446 597,451 603,451 606,446 609,455 615,449 618,457 624,460 627,469 630,474 633,485 636,494 639,492 642,493 645,503 648,509 651,497 654,491 657,492 660,502 663,501 666,514 669,512 672,523 675,524 678,516 681,511 684,514 687,510 690,509 693,518 696,516 699,507 702,515 708,515 711,514 714,510 717,495 720,498 723,495 726,512 729,521 732,530 735,526 738,519 741,513 744,498 747,494 750,488 753,456 756,456 759,460 762,467 765,471 768,467 774,471 777,468 780,470 783,476 786,483 789,483 792,481 795,486 798,485 801,495 804,495 807,498 813,493 816,495 819,500 822,473 828,475 831,482 834,482 837,474 840,467 843,472 846,479 849,477 852,469 855,472 858,468 861,450 864,455 867,465 870,465 873,477 876,462 879,467 882,469 885,464 888,447 894,448 897,442 900,446 903,448 906,442 909,452 912,458 915,470 918,470 921,467 924,463 927,465 930,450 933,435 936,433 939,438 942,415 948,409 951,407 954,398 957,408 960,406 963,418 969,419 972,424 975,419 978,417 981,396 984,385 987,389 990,391 993,386 996,404 999,412 1005,412 1008,416 1011,418 1014,428 1017,425 1020,429 1023,415 1026,416 1029,405 1032,409 1035,411 1038,401 1041,402 1044,398 1047,394 1050,384 1053,388 1056,395 1059,392 1062,386 1065,383 1068,382 1071,385 1074,377 1077,389 1080,391 1083,387 1086,393 1089,396 1092,389 1095,389 1098,394 1101,392 1104,418 1107,428 1110,431 1113,430 1116,421 1119,413 1122,420 1125,418 1128,424 1131,428 1134,419 1137,415 1143,414 1146,428 1149,439 1152,430 1155,424 1158,417 1164,421 1170,424 1173,392 1176,384 1179,376 1182,375 1185,363 1188,369 1191,373 1194,370 1197,375 1200,382 1203,392 1206,385 1209,393 1212,382 1215,387 1221,375 1224,380 1227,372 1230,364 1233,360 1236,371 1239,340 1242,343 1245,339 1248,352 1251,359 1254,365 1260,367 1263,369 1266,375 1269,369 1272,376 1275,383 1278,387 1281,386 1284,377 1287,379 1290,379 1293,368 1296,373 1299,370 1302,375 1305,372 1308,372 1311,362 1314,359 1317,359 1320,363 1323,366 1326,352 1329,346 1332,340 1335,349 1338,344 1341,359 1344,359 1347,363 1350,365 1353,373 1359,373 1362,376 1365,386 1368,384 1371,386 1374,402 1377,397 1383,396 1386,390 1389,394 1392,397 1398,398 1401,396 1404,400 1407,380 1410,378 1413,374 1416,365 1419,364 1422,358 1425,354 1428,354 1431,350 1434,357 1437,361 1440,360 1443,353 1446,346 1449,331 1452,331 1455,310 1458,312 1461,312 1464,308 1467,305 1470,308 1473,293 1476,297 1479,301 1482,291 1485,293 1488,302 1491,307 1494,302 1497,316 1500,323 1503,315 1506,308 1509,296 1512,296 1515,300 1518,308 1521,306 1524,302 1527,291 1530,281 1533,268 1536,267 1539,275 1542,275 1545,270 1548,269 1551,263 1554,253 1557,266 1560,267 1563,248 1566,245 1569,252 1572,241 1575,239 1578,227 1581,231 1584,219 1587,218 1590,217 1593,226 1596,232 1599,226 1602,215 1605,207 1608,202 1611,204 1614,196 1617,210 1620,192 1623,184 1626,192 1629,200 1632,202 1635,196 1638,201 1641,196 1644,218 1647,217 1650,218 1653,222 1656,221 1659,238 1662,239 1665,234 1668,238 1671,232 1674,227 1677,231 1680,225 1683,233 1686,230 1689,232 1692,234 1695,235 1698,211 1701,213 1707,211 1710,207 1713,219 1716,217 1719,213 1722,215 1725,206 1728,205 1731,197 1734,195 1737,200 1740,198 1743,193 1746,190 1749,190 1752,127";

var dmiPlus = "3,728 9,726 12,700 15,693 18,699 21,696 24,706 27,707 30,705 33,708 36,705 43,717 51,724 61,730 64,730 69,735 76,741 78,733 86,737 91,740 95,749 102,752 105,749 109,752 118,746 121,748 124,742 127,743 129,740 133,749 138,752 141,749 145,757 151,761 156,751 159,719 163,724 171,730 174,728 178,733 181,723 184,725 187,732 195,740 200,739 208,746 211,743 214,750 217,742 220,745 223,737 229,734 238,742 241,737 244,739 250,739 253,736 260,741 265,750 272,764 279,772 283,765 288,772 291,760 294,723 300,720 304,720 307,723 310,721 313,711 316,711 321,720 328,727 331,725 340,734 343,739 348,743 352,740 358,748 363,751 367,742 372,749 375,757 381,749 384,750 388,733 391,734 397,739 400,720 403,725 408,731 413,724 418,727 420,717 423,710 427,710 430,715 432,716 437,713 441,716 444,726 448,730 451,723 454,710 457,689 463,693 465,698 468,699 471,688 474,687 477,665 480,659 484,666 493,675 501,684 506,670 511,654 519,647 522,649 528,657 531,662 535,661 538,658 549,666 555,677 558,683 561,685 565,673 569,666 574,659 577,659 580,665 585,671 589,672 593,684 603,692 607,684 610,691 613,694 616,693 619,697 625,701 635,716 640,721 643,721 646,727 649,729 653,725 655,718 658,714 661,721 664,723 667,728 673,735 678,733 681,725 688,728 692,727 696,733 699,726 704,730 708,733 712,726 715,730 718,712 724,717 729,727 736,733 739,721 742,718 747,700 751,695 753,662 759,667 768,681 778,688 781,685 787,692 792,697 795,694 802,700 808,711 811,709 814,704 819,707 822,686 827,688 833,696 838,700 841,694 845,698 850,704 854,706 858,710 861,677 866,683 870,686 874,690 879,691 885,698 888,679 891,679 898,683 901,676 907,682 912,690 916,698 925,694 928,687 931,688 934,670 939,675 942,658 949,656 951,658 954,649 961,658 970,668 976,674 978,672 981,647 984,639 989,647 992,650 994,648 997,657 1001,661 1011,667 1015,673 1021,679 1024,673 1026,674 1029,667 1032,667 1035,673 1038,667 1041,668 1045,666 1048,667 1051,654 1054,660 1062,667 1065,660 1071,664 1074,657 1078,662 1081,664 1084,661 1090,667 1093,672 1095,669 1099,674 1102,676 1105,687 1108,691 1113,694 1116,682 1119,675 1125,680 1130,687 1133,688 1138,686 1140,688 1144,686 1147,695 1152,701 1156,694 1159,687 1162,684 1166,687 1171,689 1173,653 1176,643 1179,644 1185,633 1189,637 1198,647 1201,643 1206,653 1209,655 1213,648 1218,652 1222,648 1225,652 1228,649 1231,649 1234,642 1237,648 1240,630 1246,635 1252,646 1256,654 1264,659 1267,664 1271,662 1278,670 1281,670 1285,666 1291,670 1294,651 1298,657 1306,663 1310,661 1315,654 1320,656 1323,663 1329,643 1332,641 1336,650 1342,662 1348,671 1353,677 1357,679 1360,670 1364,676 1370,682 1375,690 1384,697 1387,690 1393,696 1398,700 1401,691 1405,693 1408,680 1412,672 1417,660 1425,659 1428,648 1433,655 1437,659 1440,659 1444,666 1447,662 1453,643 1455,616 1459,623 1467,632 1470,625 1479,637 1482,630 1488,638 1494,646 1497,641 1503,654 1506,647 1509,636 1512,635 1521,645 1525,638 1528,635 1534,614 1537,622 1549,631 1554,620 1558,620 1560,624 1564,598 1570,608 1575,609 1580,602 1583,601 1591,594 1596,605 1599,610 1604,597 1609,594 1613,595 1618,606 1624,595 1632,610 1641,615 1645,628 1656,637 1661,652 1666,654 1671,657 1676,655 1681,657 1684,661 1695,669 1698,642 1705,649 1710,646 1714,638 1718,646 1722,649 1726,643 1731,645 1737,642 1741,647 1744,638 1747,640 1749,641 1752,578";

var dmiMinus = "3,883 9,888 12,902 15,912 19,909 21,913 24,883 28,885 34,882 36,884 41,877 48,882 51,869 58,876 61,870 64,872 67,864 72,865 76,862 80,868 84,866 88,867 91,865 94,848 97,847 102,849 109,858 122,868 129,875 132,857 136,859 138,856 141,859 144,855 148,839 151,846 156,852 160,868 165,872 168,863 172,862 175,867 178,866 184,875 187,858 191,847 195,842 203,849 211,857 214,845 217,851 219,848 228,857 238,845 241,852 245,850 250,851 253,857 258,861 261,843 264,827 268,807 271,794 274,793 277,799 279,793 283,807 286,808 288,806 291,817 294,833 303,844 307,839 310,844 315,854 318,845 325,834 331,839 334,843 340,842 343,833 346,831 351,839 355,828 358,833 361,825 364,831 367,835 372,825 375,799 381,811 384,812 391,825 394,823 397,814 400,827 405,836 408,834 415,841 418,842 422,851 427,854 430,850 435,853 441,851 444,832 448,839 453,845 457,857 462,859 468,853 474,865 480,877 485,876 490,879 495,868 498,871 501,865 508,876 513,888 519,893 522,893 526,886 533,890 538,899 543,896 547,899 551,893 558,880 562,881 567,888 572,894 577,898 580,896 585,888 589,891 591,875 595,872 600,875 603,874 606,880 610,877 615,882 618,871 622,873 628,867 634,853 637,842 642,846 645,834 651,842 655,848 658,849 661,833 664,837 667,830 670,831 673,822 681,833 684,833 689,842 692,836 695,836 699,844 702,843 710,846 713,849 715,846 718,856 723,861 727,843 729,843 732,834 735,836 740,842 746,855 751,863 754,877 759,879 765,866 768,864 773,871 781,878 784,873 789,868 796,874 801,869 804,862 808,850 816,856 819,852 823,863 828,870 831,868 836,875 843,884 847,878 852,881 859,889 861,899 865,890 870,886 873,876 879,887 885,893 888,899 894,903 901,911 904,901 909,907 913,904 915,882 925,891 929,898 934,906 939,906 943,913 952,921 956,928 960,929 964,923 972,921 977,923 980,928 984,938 989,942 994,946 997,928 1002,920 1005,921 1011,918 1014,909 1018,909 1023,918 1029,923 1033,926 1035,920 1046,931 1053,938 1059,937 1068,945 1071,940 1075,943 1081,936 1085,938 1092,934 1095,937 1099,931 1101,933 1104,903 1108,894 1113,891 1117,898 1122,902 1126,898 1129,901 1131,896 1135,902 1144,908 1147,892 1149,884 1152,884 1161,894 1166,891 1171,888 1174,900 1177,907 1182,911 1188,921 1194,921 1198,917 1201,922 1204,913 1207,911 1213,920 1221,924 1228,930 1234,938 1237,931 1240,939 1245,943 1248,932 1252,925 1254,917 1258,919 1264,917 1267,908 1272,912 1278,895 1285,900 1291,901 1294,907 1297,902 1301,904 1306,908 1311,916 1318,922 1321,909 1326,915 1333,920 1336,917 1339,920 1342,912 1345,911 1348,898 1351,900 1354,891 1360,892 1364,883 1368,878 1371,882 1375,866 1378,865 1384,869 1388,873 1393,875 1397,872 1400,878 1404,874 1407,880 1413,887 1419,895 1427,901 1431,908 1435,904 1444,911 1447,918 1453,922 1456,931 1463,935 1468,938 1472,946 1479,952 1485,958 1488,949 1491,943 1495,946 1498,950 1500,944 1504,939 1507,942 1512,949 1516,944 1521,936 1526,941 1532,952 1539,960 1545,962 1553,969 1558,975 1561,971 1564,977 1569,974 1577,978 1591,988 1597,973 1604,978 1615,986 1618,973 1626,982 1632,967 1641,972 1645,951 1656,949 1659,926 1665,932 1680,943 1686,939 1695,942 1698,950 1701,941 1710,944 1714,951 1719,952 1726,957 1734,962 1738,963 1741,956 1749,960 1752,975";

function add(parent, tag, attrs, text) {
    var el = document.createElementNS("http://www.w3.org/2000/svg", tag);
    for (var key in attrs) {
        el.setAttribute(key, attrs[key]);
    }
    if (text) {
        el.textContent = text;
    }
    document.getElementById(parent).appendChild(el);
}

// one y value for each bar
function perBar(series) {
    var knots = series.split(" ").map(function(k) {
        return k.split(",").map(Number);
    });
    var out = [];
    var k = 0;
    for (var x = FIRST; x <= LAST; x += BAR) {
        while (k < knots.length - 2 && knots[k + 1][0] < x) {
            k++;
        }
        var a = knots[k];
        var b = knots[k + 1];
        out.push([x, Math.round(a[1] + (b[1] - a[1]) * (x - a[0]) / (b[0] - a[0]))]);
    }
    return out;
}

function drawLine(series, color) {
    add("plots", "polyline", { "class": "line", points: series, stroke: color });
}

function drawGrid() {
    var days = ["", "", ""];
    var weeks = "";
    var x;
    for (x = 24; x <= LAST; x += 27) {
        days[0] += "M" + (x + 0.5) + " 109V555";
        days[1] += "M" + (x + 0.5) + " 577V771";
        days[2] += "M" + (x + 0.5) + " 793V987";
    }
    for (x = 57; x <= 1812; x += 135) {
        weeks += "M" + (x + 0.5) + " 114V557";
    }
    add("grid", "path", { "class": "day grid-lines", d: days[0], "stroke-dashoffset": 19 });
    add("grid", "path", { "class": "day grid-lines", d: days[1], "stroke-dashoffset": 7 });
    add("grid", "path", { "class": "day grid-lines", d: days[2], "stroke-dashoffset": 7 });
    return weeks;
}

function drawPlots(weeks) {
    var bars = "";
    perBar(hist).forEach(function(p) {
        bars += "M" + p[0] + " " + ZERO + "V" + p[1];
    });
    add("plots", "path", { "class": "hist", d: bars });
    add("plots", "path", { "class": "week grid-lines", d: weeks });
    add("plots", "path", { "class": "zero", d: "M3 329.5H1754" });
    add("plots", "path", { "class": "zero", d: "M4 330.5H1754" });

    [[655, "#808000"], [743, "#808000"], [849, "#c06000"], [928, "#c06000"]].forEach(function(l) {
        add("plots", "path", { "class": "level", d: "M3 " + (l[0] + 0.5) + "H1753", stroke: l[1] });
    });

    drawLine(price, "#6666ff");
    drawLine(fast, "#ff0000");
    drawLine(slow, "#ffff00");
    drawLine(dmiPlus, "#00ff00");
    drawLine(dmiMinus, "#ff0000");

    var dots = "";
    perBar(price).forEach(function(p) {
        dots += "M" + (p[0] - 1) + " " + (p[1] - 2) + "h3v4h-3z";
    });
    add("plots", "path", { "class": "dots", d: dots, fill: "#00ffff" });
}

function drawAxes() {
    add("axes", "path", { "class": "axis", d: "M2 990.5H1918M1846 558.5H1918M1846 774.5H1918" });
    add("axes", "path", { "class": "axis", d: "M1847.5 90V990" });

    var labels = [[175, "136.00"], [261, "134.00"], [347, "132.00"], [433, "130.00"], [519, "128.00"],
        [609, "32.00"], [651, "28.00"], [692, "24.00"], [733, "20.00"],
        [833, "28.00"], [875, "24.00"], [917, "20.00"], [959, "16.00"]];
    var ticks = "";
    labels.forEach(function(l) {
        add("axes", "text", { "class": "axis-label", x: 1855, y: l[0] + 7 }, l[1]);
        ticks += "M1848 " + (l[0] + 0.5) + "h6";
    });
    [630, 671, 712, 812, 896].forEach(function(y) {
        ticks += "M1848 " + (y + 0.5) + "h6";
    });

    var badges = [[117, "137.12", "#6666ff"], [568, "35.08", "#00ff00"], [646, "27.50", "#808000"], [734, "19.00", "#808000"],
        [840, "26.50", "#c06000"], [919, "19.00", "#c06000"], [966, "14.44", "#ff0000"]];
    badges.forEach(function(b) {
        add("axes", "rect", { x: 1848, y: b[0], width: 70, height: 23, fill: b[2] });
        add("axes", "text", { "class": "badge-label", x: 1856, y: b[0] + 19 }, b[1]);
    });

    var dates = ["9/22", "9/27", "9/29", "10/04", "10/06", "10/11", "10/13", "10/18", "10/20", "10/25", "10/30", "11/01",
        "11/06", "11/08", "11/13", "11/15", "11/20", "11/22", "11/27", "11/30", "12/04", "12/07", "12/11", "12/14", ""];
    ticks += "M33.5 990v5M51.5 990v11";
    add("axes", "text", { "class": "date-label", x: 77, y: 1014 }, "9/18");
    add("axes", "text", { "class": "date-label", x: 128, y: 1014 }, "9/19");
    dates.forEach(function(d, i) {
        var x = 171 + i * 69;
        ticks += "M" + (x + 0.5) + " 990v5";
        add("axes", "text", { "class": "date-label", x: x + 26, y: 1014 }, d);
    });
    add("axes", "path", { "class": "axis", d: ticks });
}

drawPlots(drawGrid());
drawAxes();
```
